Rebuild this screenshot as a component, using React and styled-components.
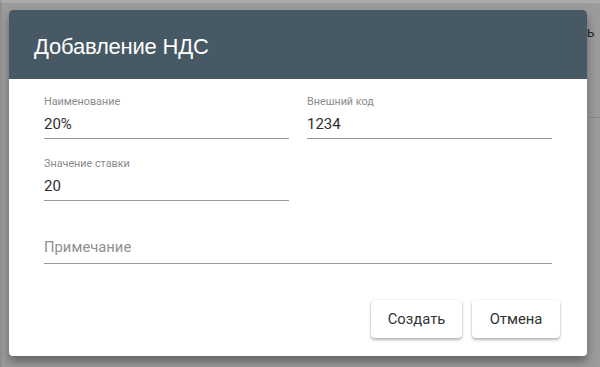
import React from "react";
import styled, { createGlobalStyle } from "styled-components";

const Global = createGlobalStyle`
  html, body { margin: 0; padding: 0; }
  body { background: #9c9c9c; font-family: Roboto, "Noto Sans", sans-serif; }
  * { box-sizing: border-box; }
`;

const Page = styled.div`
  position: relative;
  width: 600px;
  height: 367px;
  overflow: hidden;
  background: #9b9b9b;
  border-top: 3px solid #ababab;
  border-left: 2px solid #8e8e8e;
  padding: 7px 13px 0 7px;
`;

const BehindText = styled.span`
  position: absolute;
  top: 20px;
  left: 578px;
  font-family: "Liberation Sans", Arial, sans-serif;
  font-size: 15px;
  color: #1d2a33;
`;

const BehindRule = styled.div`
  position: absolute;
  top: 114px;
  left: 588px;
  right: 0;
  height: 1px;
  background: #858585;
`;

const Dialog = styled.div`
  position: relative;
  width: 578px;
  height: 346px;
  background: #fff;
  border-radius: 4px;
  overflow: hidden;
  display: flex;
  flex-direction: column;
  box-shadow: 0 6px 10px rgba(0, 0, 0, 0.35);
`;

const Header = styled.div`
  height: 69px;
  background: #465964;
  display: flex;
  align-items: center;
  padding: 4px 0 0 25px;
`;

const Title = styled.h2`
  margin: 0;
  font-family: "Liberation Sans", Arial, sans-serif;
  font-weight: 400;
  font-size: 22px;
  color: #fff;
  letter-spacing: -0.2px;
`;

const Body = styled.div`
  flex: 1;
  padding: 16px 35px 0 35px;
  display: flex;
  flex-direction: column;
`;

const Grid = styled.div`
  display: grid;
  grid-template-columns: 245px 245px;
  column-gap: 18px;
  row-gap: 18px;
`;

const Field = styled.div`
  display: flex;
  flex-direction: column;
  border-bottom: 1px solid #9a9a9a;
  width: ${(p) => p.$width || "auto"};
`;

const Label = styled.div`
  font-size: 10.8px;
  color: #8a8a8a;
  line-height: 13px;
  height: 13px;
`;

const Value = styled.div`
  font-size: 15px;
  color: #2e2e2e;
  line-height: 18px;
  padding: 7px 0 5px 0;
`;

const Placeholder = styled.div`
  font-size: 14.8px;
  color: #909090;
  line-height: 18px;
  padding: 0 0 7px 0;
`;

const NoteWrap = styled.div`
  margin-top: 37px;
`;

const Actions = styled.div`
  margin-top: auto;
  display: flex;
  justify-content: flex-end;
  gap: 10px;
  padding: 0 27px 18px 0;
  margin-right: -35px;
`;

const Button = styled.button`
  height: 38px;
  min-width: ${(p) => p.$w}px;
  padding: 0 12px;
  border: none;
  border-radius: 4px;
  background: #fff;
  font-family: Roboto, sans-serif;
  font-size: 14.8px;
  color: #333;
  box-shadow: 0 2px 3px rgba(0, 0, 0, 0.28), 0 0 2px rgba(0, 0, 0, 0.12);
  cursor: pointer;
`;

export default function App() {
  return (
    <>
      <Global />
      <Page>
        <BehindText>ть</BehindText>
        <BehindRule />
        <Dialog>
          <Header>
            <Title>Добавление НДС</Title>
          </Header>
          <Body>
            <Grid>
              <Field>
                <Label>Наименование</Label>
                <Value>20%</Value>
              </Field>
              <Field>
                <Label>Внешний код</Label>
                <Value>1234</Value>
              </Field>
              <Field>
                <Label>Значение ставки</Label>
                <Value>20</Value>
              </Field>
            </Grid>
            <NoteWrap>
              <Field $width="508px">
                <Placeholder>Примечание</Placeholder>
              </Field>
            </NoteWrap>
            <Actions>
              <Button $w={91}>Создать</Button>
              <Button $w={88}>Отмена</Button>
            </Actions>
          </Body>
        </Dialog>
      </Page>
    </>
  );
}
